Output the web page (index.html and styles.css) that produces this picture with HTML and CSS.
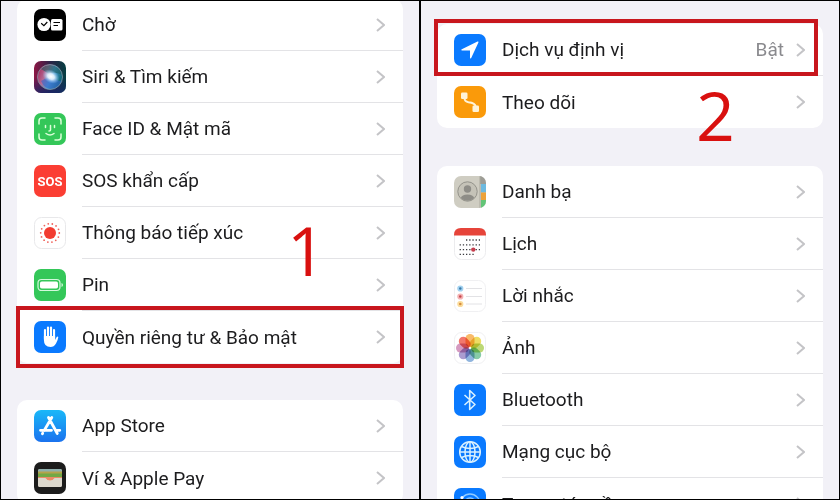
FILE: index.html
```html
<!DOCTYPE html>
<html lang="vi">
<head>
  <meta charset="UTF-8" />
  <meta name="viewport" content="width=device-width, initial-scale=1.0">
  <title>Cài đặt - Dịch vụ định vị</title>
  <link rel="stylesheet" href="styles.css">
</head>
<body>
  <svg class="defs" width="0" height="0" aria-hidden="true">
    <symbol id="chevron" viewBox="0 0 9 14">
      <path d="M1 1l7 6-7 6" fill="none" stroke="currentColor" stroke-width="2"/>
    </symbol>
  </svg>

  <main class="steps">
    <!-- Step 1 -->
    <section class="screen screen-settings">
      <ul class="group group-cut">
        <li class="row">
          <svg class="icon" viewBox="0 0 32 32">
            <rect width="32" height="32" rx="7" fill="#000"/>
            <circle cx="10" cy="15.5" r="6.6" fill="#fff"/>
            <path d="M7.2 14.2l2.7 2.4 3.4-3.6" fill="none" stroke="#000" stroke-width="1.2"/>
            <rect x="17" y="10" width="11.5" height="11.5" rx="1.5" fill="#fff"/>
            <path d="M19.5 13.5h6.5M19.5 16.5h4.5" stroke="#000" stroke-width="1.1"/>
          </svg>
          <a class="cell" href="#"><span class="label">Chờ</span><svg class="chevron"><use href="#chevron"/></svg></a>
        </li>
        <li class="row">
          <svg class="icon" viewBox="0 0 32 32">
            <defs>
              <linearGradient id="siriBg" x1="0" y1="0" x2="1" y2="0">
                <stop offset="0" stop-color="#8d1745"/>
                <stop offset=".5" stop-color="#2c2347"/>
                <stop offset="1" stop-color="#063f43"/>
              </linearGradient>
              <linearGradient id="siriOrb" x1="0" y1="0" x2="1" y2=".4">
                <stop offset="0" stop-color="#a01d50"/>
                <stop offset=".4" stop-color="#b56a94"/>
                <stop offset=".65" stop-color="#4d9fd6"/>
                <stop offset="1" stop-color="#126a7a"/>
              </linearGradient>
              <radialGradient id="siriGlow">
                <stop offset="0" stop-color="#fff"/>
                <stop offset=".4" stop-color="#e9f5ff" stop-opacity=".9"/>
                <stop offset="1" stop-color="#8cc8ff" stop-opacity="0"/>
              </radialGradient>
              <linearGradient id="siriLow" x1="0" y1="0" x2="0" y2="1">
                <stop offset=".5" stop-color="#17276b" stop-opacity="0"/>
                <stop offset="1" stop-color="#17276b" stop-opacity=".8"/>
              </linearGradient>
            </defs>
            <rect width="32" height="32" rx="7" fill="url(#siriBg)"/>
            <rect width="32" height="32" rx="7" fill="url(#siriLow)"/>
            <circle cx="16" cy="16" r="12.5" fill="url(#siriOrb)"/>
            <path d="M7 8q6-6 14-3 7 3 7 9-8-4-13-1z" fill="#1a5a5c" opacity=".6"/>
            <path d="M7 20q9-6 16-1 3 2 5 0-2 8-9 9-8 1-12-8z" fill="#3566cb" opacity=".6"/>
            <circle cx="16" cy="16" r="12.5" fill="none" stroke="#8295a5" stroke-width=".8"/>
            <ellipse cx="17" cy="15.500" rx="9" ry="6.500" fill="url(#siriGlow)" transform="rotate(30 17 15.500)"/>
          </svg>
          <a class="cell" href="#"><span class="label">Siri &amp; Tìm kiếm</span><svg class="chevron"><use href="#chevron"/></svg></a>
        </li>
        <li class="row">
          <svg class="icon" viewBox="0 0 32 32">
            <rect width="32" height="32" rx="7" fill="#34c759"/>
            <g fill="none" stroke="#dcffd9" stroke-width="1.5" stroke-linecap="round">
              <path d="M5 11V8q0-3 3-3h3M21 5h3q3 0 3 3v3M27 21v3q0 3-3 3h-3M11 27H8q-3 0-3-3v-3"/>
              <path d="M11.500 12.500v2M20.500 12.500v2M16.500 12.500v4.500q0 1-1.500 1M12 20.500q4 3 8 0"/>
            </g>
          </svg>
          <a class="cell" href="#"><span class="label">Face ID &amp; Mật mã</span><svg class="chevron"><use href="#chevron"/></svg></a>
        </li>
        <li class="row">
          <span class="icon icon-sos">SOS</span>
          <a class="cell" href="#"><span class="label">SOS khẩn cấp</span><svg class="chevron"><use href="#chevron"/></svg></a>
        </li>
        <li class="row">
          <svg class="icon" viewBox="0 0 32 32">
            <rect x=".5" y=".5" width="31" height="31" rx="7" fill="#fff" stroke="#e8e8ea"/>
            <circle cx="16" cy="16" r="6" fill="#f23c31"/>
            <circle cx="16" cy="16" r="9.300" fill="none" stroke="#f0625a" stroke-width="1.800" stroke-linecap="round" stroke-dasharray="0 4.174"/>
          </svg>
          <a class="cell" href="#"><span class="label">Thông báo tiếp xúc</span><svg class="chevron"><use href="#chevron"/></svg></a>
        </li>
        <li class="row">
          <svg class="icon" viewBox="0 0 32 32">
            <rect width="32" height="32" rx="7" fill="#34c759"/>
            <rect x="4" y="10.500" width="22" height="11" rx="3.500" fill="none" stroke="#d4f9dc" stroke-width="1.200"/>
            <rect x="6" y="12.500" width="18" height="7" rx="1.800" fill="#fff"/>
            <path d="M27.500 14v4q1.500-.6 1.500-2t-1.500-2z" fill="#d4f9dc"/>
          </svg>
          <a class="cell" href="#"><span class="label">Pin</span><svg class="chevron"><use href="#chevron"/></svg></a>
          <span class="step-number step-one">1</span>
        </li>
        <li class="row highlight highlight-privacy">
          <svg class="icon" viewBox="0 0 32 32">
            <rect width="32" height="32" rx="7" fill="#0a7aff"/>
            <g stroke="#fff" stroke-width="2.200" stroke-linecap="round" fill="none">
              <path d="M11 9v9M14 6.500V18M17 6.500V18M20 9v9"/>
            </g>
            <path d="M9.900 15h11.200v4l1.300-2.600q.9-1.400 1.900-.4-.4 3.500-2.300 6.500-2 3.500-5.500 3.500-6.600 0-6.600-7z" fill="#fff"/>
            <path d="M12.500 9.500V15M15.500 8v7M18.500 9v6" stroke="#0a7aff" stroke-width=".6"/>
          </svg>
          <a class="cell" href="#"><span class="label">Quyền riêng tư &amp; Bảo mật</span><svg class="chevron"><use href="#chevron"/></svg></a>
        </li>
      </ul>

      <ul class="group">
        <li class="row">
          <svg class="icon" viewBox="0 0 32 32">
            <defs>
              <linearGradient id="storeBg" x1="0" y1="0" x2="0" y2="1">
                <stop offset="0" stop-color="#1ab8f8"/>
                <stop offset="1" stop-color="#1a72ee"/>
              </linearGradient>
            </defs>
            <rect width="32" height="32" rx="7" fill="url(#storeBg)"/>
            <g stroke="#fff" stroke-width="2.800" stroke-linecap="round" fill="none">
              <path d="M17.800 7.500l-7.600 13M14.500 7.500l8.800 16M6.500 20.300h11M22 20.300h3.800M8.700 23.300l-.3.500"/>
            </g>
          </svg>
          <a class="cell" href="#"><span class="label">App Store</span><svg class="chevron"><use href="#chevron"/></svg></a>
        </li>
        <li class="row">
          <svg class="icon" viewBox="0 0 32 32">
            <rect width="32" height="32" rx="7" fill="#1c1c1c"/>
            <rect x="4" y="7" width="24" height="18" rx="2" fill="#d8d3c6"/>
            <path d="M4 10V9q0-2 2-2h20q2 0 2 2v1z" fill="#8fb0ad"/>
            <path d="M4 9.500h24v3H4z" fill="#b6a34a"/>
            <path d="M4 11.500h24v3.500H4z" fill="#72a845"/>
            <path d="M4 15h24v2h-8q-1 2-4 2t-4-2H4z" fill="#ec8a67"/>
            <path d="M4 16h7.500q1.500 2.500 4.500 2.500t4.500-2.500H28v7q0 2-2 2H6q-2 0-2-2z" fill="#dcd8cd"/>
          </svg>
          <a class="cell" href="#"><span class="label">Ví &amp; Apple Pay</span><svg class="chevron"><use href="#chevron"/></svg></a>
        </li>
      </ul>
    </section>

    <!-- Step 2 -->
    <section class="screen screen-privacy">
      <ul class="group">
        <li class="row highlight highlight-location">
          <svg class="icon" viewBox="0 0 32 32">
            <rect width="32" height="32" rx="7" fill="#0a7aff"/>
            <path d="M23.500 7.500q1.300-.4.900.9L17.200 24q-.9 1.300-1.200-.2v-7.300H8q-1.700-.4-.2-1.300z" fill="#fff"/>
          </svg>
          <a class="cell" href="#"><span class="label">Dịch vụ định vị</span><span class="value">Bật</span><svg class="chevron"><use href="#chevron"/></svg></a>
        </li>
        <li class="row">
          <svg class="icon" viewBox="0 0 32 32">
            <rect width="32" height="32" rx="7" fill="#fa9a0a"/>
            <rect x="7" y="6.500" width="6.500" height="6.500" rx="1.300" fill="#fff3d8"/>
            <rect x="18.500" y="19.500" width="6.500" height="6.500" rx="1.300" fill="#fff3d8"/>
            <path d="M10.500 12q0 3.500 4 4.200 6.800.6 7.200 4.500" fill="none" stroke="#fff3d8" stroke-width="1.900"/>
          </svg>
          <a class="cell" href="#"><span class="label">Theo dõi</span><svg class="chevron"><use href="#chevron"/></svg></a>
          <span class="step-number step-two">2</span>
        </li>
      </ul>

      <ul class="group">
        <li class="row">
          <svg class="icon" viewBox="0 0 32 32">
            <clipPath id="iconClip"><rect width="32" height="32" rx="7"/></clipPath>
            <g clip-path="url(#iconClip)">
              <rect width="32" height="32" fill="#cfcdc2"/>
              <path d="M26 0h6v8h-6z" fill="#9d9c95"/>
              <path d="M27 8h5v8.500h-5z" fill="#6db9df"/>
              <path d="M27 16.500h5V24h-5z" fill="#eda23a"/>
              <path d="M27 24h5v8h-5z" fill="#62c577"/>
              <path d="M26 0v32" stroke="#aaa99f" stroke-width="1"/>
            </g>
            <circle cx="13.500" cy="15.500" r="9.700" fill="#c5c3b8" stroke="#8d8c85" stroke-width=".9"/>
            <circle cx="13.500" cy="13" r="3.700" fill="#8e8d87"/>
            <path d="M6.800 22q1-3.500 6.700-3.500t6.700 3.500q-2.700 2.800-6.700 2.800T6.800 22z" fill="#8e8d87"/>
          </svg>
          <a class="cell" href="#"><span class="label">Danh bạ</span><svg class="chevron"><use href="#chevron"/></svg></a>
        </li>
        <li class="row">
          <svg class="icon" viewBox="0 0 32 32">
            <rect x=".5" y=".5" width="31" height="31" rx="7" fill="#fff" stroke="#ececee"/>
            <path d="M0 7.500V7q0-7 7-7h18q7 0 7 7v.5z" fill="#e6443a"/>
            <g fill="none" stroke="#3b3b40" stroke-width="1.300" stroke-dasharray="1.300 1.900">
              <path d="M12 12h14M5.600 16.800H26M5.600 21.600H26M5.600 26.400H20"/>
            </g>
            <circle cx="19.300" cy="21.600" r="2.200" fill="#c73f4e"/>
          </svg>
          <a class="cell" href="#"><span class="label">Lịch</span><svg class="chevron"><use href="#chevron"/></svg></a>
        </li>
        <li class="row">
          <svg class="icon" viewBox="0 0 32 32">
            <rect x=".5" y=".5" width="31" height="31" rx="7" fill="#fff" stroke="#f0f0f2"/>
            <path d="M12 8.500h16M12 16.500h16M12 24h16" stroke="#e2e2e5"/>
            <g stroke-width="1.800">
              <circle cx="6.300" cy="8.500" r="2.200" fill="#3878a8" stroke="#a3d2f0"/>
              <circle cx="6.300" cy="16.500" r="2.200" fill="#c4454b" stroke="#f4b3b4"/>
              <circle cx="6.300" cy="24" r="2.200" fill="#d58e3e" stroke="#fbdc9c"/>
            </g>
          </svg>
          <a class="cell" href="#"><span class="label">Lời nhắc</span><svg class="chevron"><use href="#chevron"/></svg></a>
        </li>
        <li class="row">
          <svg class="icon" viewBox="0 0 32 32">
            <rect x=".5" y=".5" width="31" height="31" rx="7" fill="#fff" stroke="#f0f0f2"/>
            <g class="petals">
              <rect x="11.500" y="2" width="9" height="13" rx="4.500" fill="#f7a336"/>
              <rect x="11.500" y="2" width="9" height="13" rx="4.500" fill="#e8d22e" transform="rotate(45 16 16)"/>
              <rect x="11.500" y="2" width="9" height="13" rx="4.500" fill="#a5cb46" transform="rotate(90 16 16)"/>
              <rect x="11.500" y="2" width="9" height="13" rx="4.500" fill="#5fb98a" transform="rotate(135 16 16)"/>
              <rect x="11.500" y="2" width="9" height="13" rx="4.500" fill="#6b9cd3" transform="rotate(180 16 16)"/>
              <rect x="11.500" y="2" width="9" height="13" rx="4.500" fill="#8f7ac0" transform="rotate(225 16 16)"/>
              <rect x="11.500" y="2" width="9" height="13" rx="4.500" fill="#c778ac" transform="rotate(270 16 16)"/>
              <rect x="11.500" y="2" width="9" height="13" rx="4.500" fill="#ee4b3b" transform="rotate(315 16 16)"/>
            </g>
          </svg>
          <a class="cell" href="#"><span class="label">Ảnh</span><svg class="chevron"><use href="#chevron"/></svg></a>
        </li>
        <li class="row">
          <svg class="icon" viewBox="0 0 32 32">
            <rect width="32" height="32" rx="7" fill="#0a7aff"/>
            <path d="M10.500 11l10.500 9.500-5.300 5V6.500l5.300 5L10.500 21" fill="none" stroke="#d9f1ff" stroke-width="1.600" stroke-linejoin="round"/>
          </svg>
          <a class="cell" href="#"><span class="label">Bluetooth</span><svg class="chevron"><use href="#chevron"/></svg></a>
        </li>
        <li class="row">
          <svg class="icon" viewBox="0 0 32 32">
            <rect width="32" height="32" rx="7" fill="#0a7aff"/>
            <g fill="none" stroke="#d9f1ff" stroke-width="1.500">
              <circle cx="16" cy="16" r="10.300"/>
              <ellipse cx="16" cy="16" rx="5" ry="10.300"/>
              <path d="M16 5.700v20.600M5.700 16h20.600M7.500 10.500q8.500 4 17 0M7.500 21.500q8.500-4 17 0"/>
            </g>
          </svg>
          <a class="cell" href="#"><span class="label">Mạng cục bộ</span><svg class="chevron"><use href="#chevron"/></svg></a>
        </li>
        <li class="row">
          <svg class="icon" viewBox="0 0 32 32">
            <rect width="32" height="32" rx="7" fill="#0a7aff"/>
            <g fill="none" stroke="#8fcaff" stroke-width="1.300">
              <circle cx="16" cy="16" r="10"/>
              <circle cx="16" cy="16" r="6"/>
            </g>
            <circle cx="16" cy="16" r="2.500" fill="#fff"/>
            <circle cx="8" cy="9.500" r="1.600" fill="#fff"/>
          </svg>
          <a class="cell" href="#"><span class="label">Tương tác gần</span><svg class="chevron"><use href="#chevron"/></svg></a>
        </li>
      </ul>
    </section>
  </main>
</body>
</html>
```

FILE: styles.css
```css
* {
  box-sizing: border-box;
}

body {
  margin: 0;
  font-family: Roboto, "Noto Sans", sans-serif;
  font-size: 19px;
  color: #1c1c1e;
  background-color: #f2f1f7;
}

.defs {
  position: absolute;
}

.steps {
  display: grid;
  grid-template-columns: 1fr 1fr;
  gap: 2px;
  height: 100vh;
  border: 1px solid #000;
  background-color: #000;
  overflow: hidden;
}

.screen {
  display: flex;
  flex-direction: column;
  padding: 0 16px;
  min-width: 0;
  background-color: #f2f1f7;
  overflow: hidden;
}

.screen-settings {
  gap: 37px;
}

.screen-privacy {
  gap: 38px;
  padding-top: 23px;
}

.group {
  flex: none;
  margin: 0;
  padding: 0;
  list-style: none;
  background-color: #fff;
  border-radius: 10px;
}

/* list scrolled under the top edge */
.group-cut {
  margin-top: -2px;
}

.row {
  position: relative;
  display: flex;
  align-items: center;
  gap: 16px;
  height: 52px;
  padding-left: 17px;
}

.icon {
  flex: none;
  width: 32px;
  height: 32px;
}

.icon-sos {
  display: flex;
  align-items: center;
  justify-content: center;
  border-radius: 7px;
  background-color: #fb3e33;
  color: #fff;
  font-family: Roboto, sans-serif;
  font-size: 13px;
  font-weight: 700;
}

.petals rect {
  mix-blend-mode: multiply;
  opacity: 0.75;
}

.cell {
  flex: 1;
  display: flex;
  align-items: center;
  gap: 12px;
  height: 100%;
  min-width: 0;
  padding-right: 18px;
  border-bottom: 1px solid #e3e3e6;
  color: inherit;
  text-decoration: none;
}

.row:last-child .cell {
  border-bottom: none;
}

.label {
  flex: 1;
  white-space: nowrap;
}

.value {
  color: #8a8a8e;
}

.chevron {
  flex: none;
  width: 9px;
  height: 14px;
  color: #c4c4c7;
}

/* red marks of the guide */
.highlight::after {
  content: "";
  position: absolute;
  border: 4px solid #c8161d;
  pointer-events: none;
}

.highlight-privacy::after {
  inset: -5px -1px;
}

.highlight-location::after {
  inset: -5px 5px 0 -3px;
}

.step-number {
  position: absolute;
  z-index: 1;
  color: #d9100f;
  font-family: "Open Sans", sans-serif;
  font-size: 68px;
  line-height: 68px;
  pointer-events: none;
}

.step-one {
  right: 77px;
  bottom: 27px;
}

.step-two {
  right: 88px;
  top: 5px;
}
```
